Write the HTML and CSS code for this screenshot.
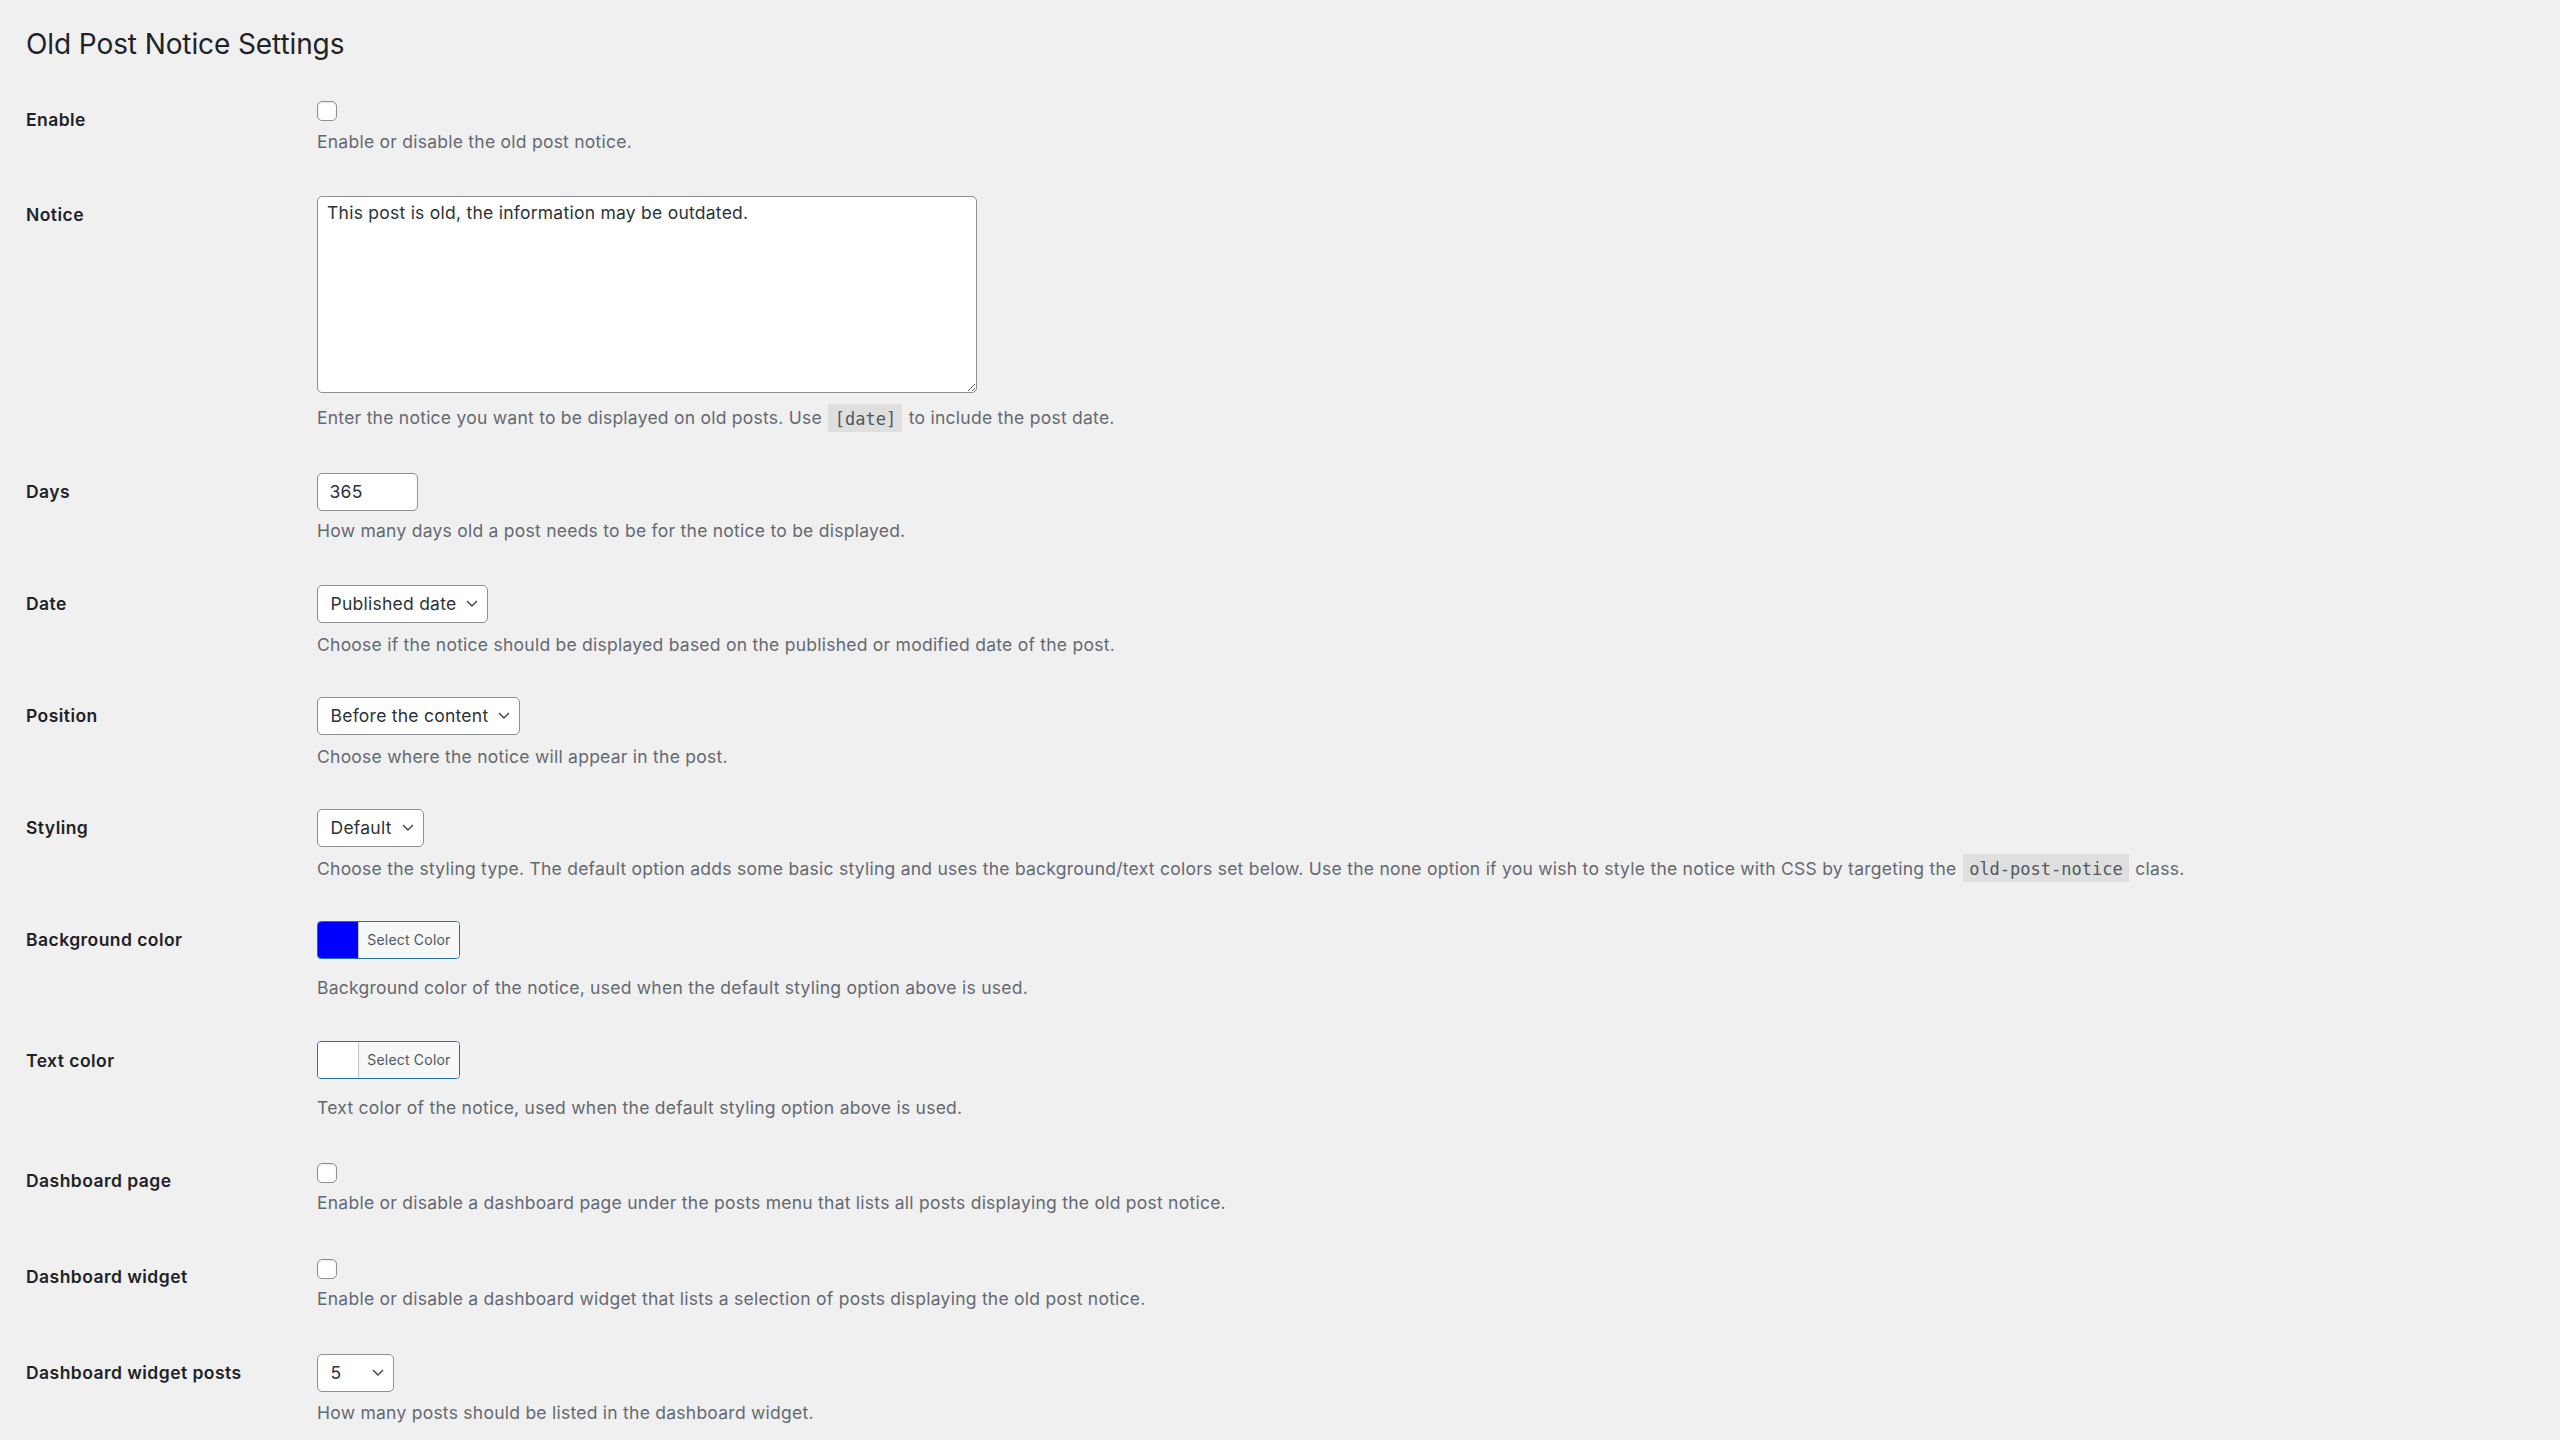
FILE: index.html
```html
<!DOCTYPE html>
<html lang="en">
<head>
<meta charset="utf-8">
<title>Old Post Notice Settings</title>
<link rel="stylesheet" href="styles.css">
</head>
<body>
<div class="wrap">
  <h1 class="title">Old Post Notice Settings</h1>
  <div class="form">
    <div class="row row-check">
      <div class="label">Enable</div>
      <div class="field">
        <input type="checkbox" class="check">
        <p class="desc">Enable or disable the old post notice.</p>
      </div>
    </div>
    <div class="row row-text">
      <div class="label">Notice</div>
      <div class="field">
        <textarea class="textarea">This post is old, the information may be outdated.</textarea>
        <p class="desc">Enter the notice you want to be displayed on old posts. Use <code class="code">[date]</code> to include the post date.</p>
      </div>
    </div>
    <div class="row row-input">
      <div class="label">Days</div>
      <div class="field">
        <input type="text" class="input" value="365">
        <p class="desc">How many days old a post needs to be for the notice to be displayed.</p>
      </div>
    </div>
    <div class="row row-select">
      <div class="label">Date</div>
      <div class="field">
        <div class="select"><span>Published date</span><svg class="chev" width="12" height="7" viewBox="0 0 12 7"><path d="M1 1l5 5 5-5" fill="none" stroke="#3c434a" stroke-width="1.4"/></svg></div>
        <p class="desc">Choose if the notice should be displayed based on the published or modified date of the post.</p>
      </div>
    </div>
    <div class="row row-select">
      <div class="label">Position</div>
      <div class="field">
        <div class="select"><span>Before the content</span><svg class="chev" width="12" height="7" viewBox="0 0 12 7"><path d="M1 1l5 5 5-5" fill="none" stroke="#3c434a" stroke-width="1.4"/></svg></div>
        <p class="desc">Choose where the notice will appear in the post.</p>
      </div>
    </div>
    <div class="row row-select">
      <div class="label">Styling</div>
      <div class="field">
        <div class="select"><span>Default</span><svg class="chev" width="12" height="7" viewBox="0 0 12 7"><path d="M1 1l5 5 5-5" fill="none" stroke="#3c434a" stroke-width="1.4"/></svg></div>
        <p class="desc">Choose the styling type. The default option adds some basic styling and uses the background/text colors set below. Use the none option if you wish to style the notice with CSS by targeting the <code class="code">old-post-notice</code> class.</p>
      </div>
    </div>
    <div class="row row-color">
      <div class="label">Background color</div>
      <div class="field">
        <button type="button" class="color-btn"><span class="swatch swatch-blue"></span><span class="color-text">Select Color</span></button>
        <p class="desc">Background color of the notice, used when the default styling option above is used.</p>
      </div>
    </div>
    <div class="row row-color">
      <div class="label">Text color</div>
      <div class="field">
        <button type="button" class="color-btn"><span class="swatch swatch-white"></span><span class="color-text">Select Color</span></button>
        <p class="desc">Text color of the notice, used when the default styling option above is used.</p>
      </div>
    </div>
    <div class="row row-check">
      <div class="label">Dashboard page</div>
      <div class="field">
        <input type="checkbox" class="check">
        <p class="desc">Enable or disable a dashboard page under the posts menu that lists all posts displaying the old post notice.</p>
      </div>
    </div>
    <div class="row row-check">
      <div class="label">Dashboard widget</div>
      <div class="field">
        <input type="checkbox" class="check">
        <p class="desc">Enable or disable a dashboard widget that lists a selection of posts displaying the old post notice.</p>
      </div>
    </div>
    <div class="row row-select">
      <div class="label">Dashboard widget posts</div>
      <div class="field">
        <div class="select select-sm"><span>5</span><svg class="chev" width="12" height="7" viewBox="0 0 12 7"><path d="M1 1l5 5 5-5" fill="none" stroke="#3c434a" stroke-width="1.4"/></svg></div>
        <p class="desc">How many posts should be listed in the dashboard widget.</p>
      </div>
    </div>
  </div>
</div>
</body>
</html>
```
FILE: styles.css
```css
* { box-sizing: border-box; }

html, body {
  margin: 0;
  background: #f0f0f1;
}

body {
  font-family: Inter, "Noto Sans", sans-serif;
  color: #1d2327;
}

.wrap {
  padding: 26px 0 0 26px;
}

.title {
  margin: 0 0 19px;
  font-size: 28px;
  line-height: 36px;
  font-weight: 400;
  letter-spacing: -0.1px;
  color: #1d2327;
}

.row {
  display: grid;
  grid-template-columns: 291px 1fr;
}

.label {
  padding-top: 27.5px;
  font-size: 17.5px;
  line-height: 21px;
  font-weight: 600;
  letter-spacing: 0.45px;
  color: #1d2327;
}

.field {
  display: flex;
  flex-direction: column;
  align-items: flex-start;
}

.row-check .field { padding: 20px 0 23.4px; }
.row-check .desc { margin-top: 8.6px; }

.row-text .field { padding: 19px 0 23.9px; }
.row-text .desc { margin-top: 13.1px; }

.row-input .field { padding: 19px 0 22.9px; }
.row-input .desc { margin-top: 8.1px; }

.row-select .field { padding: 19px 0 21.4px; }
.row-select .desc { margin-top: 9.6px; }

.row-color .field { padding: 19px 0 22.9px; }
.row-color .desc { margin-top: 16.6px; }

.desc {
  margin: 0;
  font-size: 17.5px;
  line-height: 24px;
  letter-spacing: 0.25px;
  color: #646970;
  white-space: nowrap;
}

.code {
  font-family: "DejaVu Sans Mono", "Liberation Mono", monospace;
  font-size: 17px;
  letter-spacing: 0;
  padding: 4.5px 6.25px 3.5px;
  margin: 0 1.25px;
  background: rgba(0, 0, 0, 0.07);
  color: #50575e;
}

.check {
  -webkit-appearance: none;
  appearance: none;
  display: block;
  width: 20px;
  height: 20px;
  margin: 0;
  border: 1.25px solid #8c8f94;
  border-radius: 5px;
  background: #fff;
  box-shadow: inset 0 1px 2px rgba(0, 0, 0, 0.1);
}

.textarea {
  display: block;
  width: 660px;
  height: 197px;
  margin: 0;
  padding: 3px 9px;
  border: 1.25px solid #8c8f94;
  border-radius: 5px;
  background: #fff;
  font-family: Inter, "Noto Sans", sans-serif;
  font-size: 17.5px;
  line-height: 25px;
  letter-spacing: 0.25px;
  color: #2c3338;
}

.input {
  display: block;
  width: 101px;
  height: 38px;
  margin: 0;
  padding: 0 11.5px;
  border: 1.25px solid #8c8f94;
  border-radius: 5px;
  background: #fff;
  font-family: Inter, "Noto Sans", sans-serif;
  font-size: 17.5px;
  letter-spacing: 0.25px;
  color: #2c3338;
}

.select {
  display: inline-flex;
  align-items: center;
  justify-content: space-between;
  gap: 10px;
  height: 38px;
  padding: 0 9px 0 12.5px;
  border: 1.25px solid #8c8f94;
  border-radius: 5px;
  background: #fff;
  font-size: 17.5px;
  letter-spacing: 0.25px;
  color: #2c3338;
}

.select-sm { width: 77px; }

.chev { display: block; flex: none; }

.color-btn {
  display: flex;
  align-items: stretch;
  height: 38px;
  margin: 0;
  padding: 0;
  border: 1.25px solid #2271b1;
  border-radius: 3.75px;
  background: #f6f7f7;
  overflow: hidden;
  font-family: Inter, "Noto Sans", sans-serif;
  cursor: pointer;
}

.swatch {
  display: block;
  width: 39.75px;
}

.swatch-blue { background: #0000ff; }
.swatch-white { background: #ffffff; }

.color-text {
  display: block;
  padding: 0 8.5px;
  border-left: 1.25px solid #c3c4c7;
  font-size: 14px;
  line-height: 35.5px;
  letter-spacing: 0.2px;
  color: #50575e;
  background: #f6f7f7;
}
```
